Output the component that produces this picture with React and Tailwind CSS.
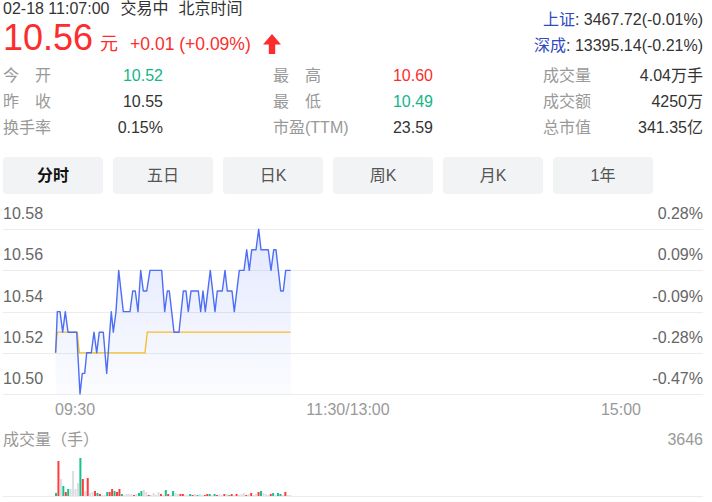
import React from "react";

const RED = "#fb2d2d";

const y = (k) => +(394 - k * 20.6).toFixed(1);

const blue = [
  [55.7, 2], [57.3, 4], [60, 4], [62.7, 3], [65.3, 4], [68, 3], [76.7, 3], [80, 0], [82.3, 1], [84.7, 1],
  [86.7, 2], [91.3, 2], [94, 3], [96.7, 2], [99.3, 3], [103.3, 3], [106.7, 1], [111.3, 4], [113.3, 3], [116, 4],
  [118.7, 6], [123.3, 4], [130, 4], [132.7, 5], [135.3, 5], [138, 4], [140.7, 6], [143.3, 5], [146.7, 5], [150, 6],
  [161.7, 6], [164.7, 4], [167.3, 5], [169.3, 5], [174, 3], [179, 3], [183.3, 5], [186, 5], [188.3, 4], [191, 5],
  [198.3, 5], [200.7, 4], [203, 5], [205.3, 4], [210.3, 6], [215, 4], [217.3, 5], [222.3, 5], [225, 6], [227.3, 5],
  [232, 5], [234.3, 4], [239.3, 6], [244, 6], [246.7, 7], [249.3, 6], [251.7, 7], [256, 7], [258.7, 8], [261, 7],
  [268.3, 7], [271, 6], [273.7, 7], [276, 7], [280.7, 5], [283.3, 5], [285.7, 6], [290.7, 6],
];
const avg = [[55.3, 2], [57.3, 3], [77.3, 3], [79.3, 2], [145, 2], [147.3, 3], [290.7, 3]];

const bluePts = blue.map(([x, k]) => `${x},${y(k)}`).join(" ");
const avgPts = avg.map(([x, k]) => `${x},${y(k)}`).join(" ");
const fillPts = `${bluePts} 290.7,394 55.7,394`;

const vol = [
  [3, "g"], [35, "r"], [17, "n"], [10, "g"], [4, "r"], [7, "g"], [7, "n"], [25, "n"], [7, "n"], [13, "n"],
  [38, "g"], [17, "r"], [5, "n"], [18, "r"], [3, "n"], [4, "n"], [5, "r"], [3, "g"], [2, "r"], [1, "n"],
  [1, "n"], [4, "g"], [4, "r"], [7, "r"], [5, "g"], [4, "r"], [7, "r"], [2, "g"], [1, "n"], [2, "n"],
  [2, "n"], [2, "n"], [1, "r"], [2, "n"], [3, "g"], [5, "g"], [6, "n"], [4, "n"], [1, "r"], [1, "n"],
  [3, "n"], [1, "n"], [4, "n"], [2, "r"], [1, "n"], [6, "g"], [2, "r"], [1, "n"], [5, "g"], [3, "n"],
  [2, "n"], [2, "r"], [2, "r"], [1, "n"], [1, "n"], [2, "g"], [1, "r"], [2, "n"], [1, "g"], [2, "n"],
  [1, "n"], [1, "r"], [2, "r"], [2, "g"], [1, "n"], [2, "g"], [1, "r"], [2, "n"], [1, "n"], [2, "r"],
  [2, "n"], [1, "g"], [2, "r"], [1, "n"], [2, "r"], [1, "n"], [2, "n"], [3, "n"], [1, "r"], [2, "n"],
  [3, "r"], [1, "n"], [2, "n"], [4, "r"], [5, "g"], [3, "n"], [2, "n"], [1, "n"], [2, "r"], [3, "g"],
  [1, "n"], [3, "g"], [2, "g"], [1, "n"], [4, "r"], [1, "n"], [1, "n"],
];
const volColor = { r: "#ff3b3b", g: "#15c28e", n: "#dcdde2" };

function Label2({ a, b }) {
  return (
    <span className="inline-flex w-[48px] justify-between text-[#999]">
      <span>{a}</span>
      <span>{b}</span>
    </span>
  );
}

function Stat({ label, value, color }) {
  return (
    <div className="flex justify-between">
      {typeof label === "string" ? <span className="text-[#999]">{label}</span> : label}
      <span className={color || "text-[#333]"}>{value}</span>
    </div>
  );
}

const tabs = ["分时", "五日", "日K", "周K", "月K", "1年"];

const gridRows = [
  ["10.58", "0.28%", "h-[30px]"],
  ["10.56", "0.09%", "h-[41px]"],
  ["10.54", "-0.09%", "h-[42px]"],
  ["10.52", "-0.28%", "h-[41px]"],
  ["10.50", "-0.47%", "h-[41px]"],
];

export default function App() {
  return (
    <div className="w-[712px] h-[502px] overflow-hidden bg-white pl-[3px] pr-[9px] font-['Liberation_Sans','Noto_Sans_CJK_SC',sans-serif] text-[16px] text-[#333]">
      {/* header */}
      <div className="flex h-[63px] justify-between items-start">
        <div>
          <div className="flex leading-[18px] text-[#333]">
            <span>02-18 11:07:00</span>
            <span className="ml-[11px]">交易中</span>
            <span className="ml-[10px]">北京时间</span>
          </div>
          <div className="mt-[2px] flex items-baseline text-[#fb2d2d]">
            <span className="text-[36px] leading-[36px]">10.56</span>
            <span className="ml-[7px] text-[18px]">元</span>
            <span className="ml-[12px] text-[17.5px]">+0.01 (+0.09%)</span>
            <svg className="ml-[12px] self-center mt-[9px]" width="18" height="20" viewBox="0 0 18 20">
              <polygon points="9,0 18,10.5 12.2,10.5 12.2,20 5.8,20 5.8,10.5 0,10.5" fill={RED} />
            </svg>
          </div>
        </div>
        <div className="pt-[7px] text-right text-[16px] leading-[26px] text-[#333]">
          <div>
            <span className="text-[#2f4bbf]">上证</span>: 3467.72(-0.01%)
          </div>
          <div>
            <span className="text-[#2f4bbf]">深成</span>: 13395.14(-0.21%)
          </div>
        </div>
      </div>

      {/* stats */}
      <div className="grid grid-cols-[160px_160px_160px] gap-x-[110px] leading-[26px]">
        <Stat label={<Label2 a="今" b="开" />} value="10.52" color="text-[#14b58a]" />
        <Stat label={<Label2 a="最" b="高" />} value="10.60" color="text-[#fb2d2d]" />
        <Stat label="成交量" value="4.04万手" />
        <Stat label={<Label2 a="昨" b="收" />} value="10.55" />
        <Stat label={<Label2 a="最" b="低" />} value="10.49" color="text-[#14b58a]" />
        <Stat label="成交额" value="4250万" />
        <Stat label="换手率" value="0.15%" />
        <Stat label="市盈(TTM)" value="23.59" />
        <Stat label="总市值" value="341.35亿" />
      </div>

      {/* tabs */}
      <div className="mt-[16px] flex gap-[10px]">
        {tabs.map((t, i) => (
          <div
            key={t}
            className={
              "flex h-[37px] w-[100px] items-center justify-center rounded-[4px] bg-[#f2f3f5] text-[16px] " +
              (i === 0 ? "font-bold text-[#111]" : "text-[#555]")
            }
          >
            {t}
          </div>
        ))}
      </div>

      {/* chart */}
      <div className="relative mt-[6px]">
        {gridRows.map(([l, r, h]) => (
          <div key={l} className={`flex items-end justify-between border-b border-[#ececec] ${h}`}>
            <span className="pb-[5px] leading-[20px] text-[#666]">{l}</span>
            <span className="pb-[5px] leading-[20px] text-[#666]">{r}</span>
          </div>
        ))}
        <svg className="absolute left-0 top-0" width="700" height="195" viewBox="3 200 700 195">
          <defs>
            <linearGradient id="fillg" x1="0" y1="0" x2="0" y2="1">
              <stop offset="0%" stopColor="#4d6ef5" stopOpacity="0.16" />
              <stop offset="100%" stopColor="#4d6ef5" stopOpacity="0.02" />
            </linearGradient>
          </defs>
          <polygon points={fillPts} fill="url(#fillg)" />
          <polyline points={avgPts} fill="none" stroke="#f5bd22" strokeWidth="1.3" />
          <polyline points={bluePts} fill="none" stroke="#4d6ef5" strokeWidth="1.4" strokeLinejoin="round" />
        </svg>
      </div>

      {/* x axis */}
      <div className="h-[35px] pt-[5px] leading-[20px] text-[#999]">
        <div className="ml-[52px] flex w-[586px] justify-between">
          <span>09:30</span>
          <span>11:30/13:00</span>
          <span>15:00</span>
        </div>
      </div>

      {/* volume */}
      <div className="flex h-[20px] justify-between leading-[20px] text-[#999]">
        <span>成交量（手）</span>
        <span>3646</span>
      </div>
      <div className="h-[47px] border-b border-[#ececec]">
        <svg width="700" height="46" viewBox="3 450 700 46">
          {vol.map(([h, c], i) => (
            <rect key={i} x={55 + i * 2.44} y={496 - h} width="2" height={h} fill={volColor[c]} />
          ))}
        </svg>
      </div>
    </div>
  );
}
